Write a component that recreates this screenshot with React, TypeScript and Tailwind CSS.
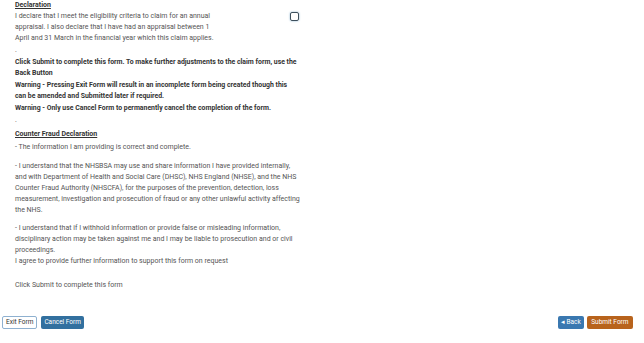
import React from "react";

const Para = ({ children, className = "" }: { children: React.ReactNode; className?: string }) => (
  <p className={`m-0 whitespace-nowrap ${className}`}>{children}</p>
);

export default function App() {
  return (
    <div
      className="h-[343px] w-[644px] bg-white text-[7px] leading-[11px] text-[#555]"
      style={{ fontFamily: "Roboto, 'Liberation Sans', sans-serif" }}
    >
      <div className="w-[310px] pl-[15px]">
        <Para className="font-bold text-[#333] underline">Declaration</Para>
        <div className="flex">
          <Para className="w-[211px]">
            I declare that I meet the eligibility criteria to claim for an annual
            <br />
            appraisal. I also declare that I have had an appraisal between 1
            <br />
            April and 31 March in the financial year which this claim applies.
          </Para>
          <div className="ml-[64px] mt-[1px]">
            <div className="h-[9px] w-[9px] rounded-[2px] border-[1.5px] border-[#3d4f5c] shadow-[0_0_2px_#7aa7c7]" />
          </div>
        </div>
        <Para className="mt-[1px]">.</Para>
        <div className="text-[6.9px] font-bold text-[#333]">
          <Para className="mt-[1px]">
            Click Submit to complete this form. To make further adjustments to the claim form, use the
            <br />
            Back Button
          </Para>
          <Para className="mt-[1px]">
            Warning - Pressing Exit Form will result in an incomplete form being created though this
            <br />
            can be amended and Submitted later if required.
          </Para>
          <Para className="mt-[1px]">
            Warning - Only use Cancel Form to permanently cancel the completion of the form.
          </Para>
        </div>
        <Para className="mt-[1px]">.</Para>
        <Para className="mt-[3px] font-bold text-[#333] underline">Counter Fraud Declaration</Para>
        <Para className="mt-[2px]">- The information I am providing is correct and complete.</Para>
        <Para className="mt-[8px]">
          - I understand that the NHSBSA may use and share information I have provided internally,
          <br />
          and with Department of Health and Social Care (DHSC), NHS England (NHSE), and the NHS
          <br />
          Counter Fraud Authority (NHSCFA), for the purposes of the prevention, detection, loss
          <br />
          measurement, investigation and prosecution of fraud or any other unlawful activity affecting
          <br />
          the NHS.
        </Para>
        <Para className="mt-[7px]">
          - I understand that if I withhold information or provide false or misleading information,
          <br />
          disciplinary action may be taken against me and I may be liable to prosecution and or civil
          <br />
          proceedings.
        </Para>
        <Para>I agree to provide further information to support this form on request</Para>
        <Para className="mt-[13px]">Click Submit to complete this form</Para>
      </div>
      <div className="mt-[25px] flex items-center justify-between pl-[2px] pr-[11px]">
        <div className="flex gap-[4px]">
          <button className="h-[13px] rounded-[2px] border border-[#8fb1d0] bg-white px-[3px] text-[6.5px] leading-[11px] text-[#333]">
            Exit Form
          </button>
          <button className="h-[13px] rounded-[2px] bg-[#32709f] px-[3px] text-[6.5px] leading-[13px] text-white">
            Cancel Form
          </button>
        </div>
        <div className="flex gap-[3px]">
          <button className="h-[13px] rounded-[2px] bg-[#3a78b0] px-[3px] text-[6.5px] leading-[13px] text-white">
            ◂ Back
          </button>
          <button className="h-[13px] rounded-[2px] bg-[#b8631c] px-[4.5px] text-[6.5px] leading-[13px] text-white">
            Submit Form
          </button>
        </div>
      </div>
    </div>
  );
}
